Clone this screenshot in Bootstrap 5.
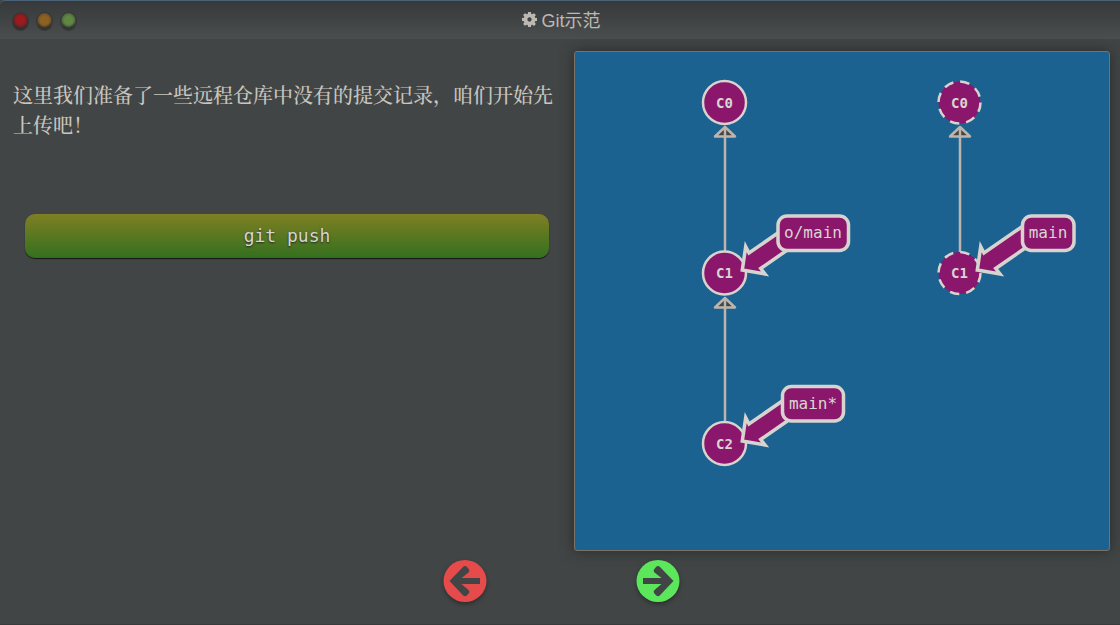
<!DOCTYPE html>
<html lang="zh-CN">
<head>
<meta charset="utf-8">
<meta name="viewport" content="width=device-width, initial-scale=1">
<title>Git示范</title>
<link rel="stylesheet" href="https://cdn.jsdelivr.net/npm/bootstrap@5.3.0/dist/css/bootstrap.min.css">
<style>
  body { background: #424545; color: #c9c5bf; font-family: "Liberation Sans", "Noto Sans CJK SC", sans-serif; }
  .title-bar { height: 39px; padding: 2px 0 0 3px; border-top: 1px solid #4a6278; border-top-left-radius: 5px; background: linear-gradient(#37393a, #4a4e4e); color: #bcb8b2; font-size: 18px; line-height: 24px; }
  .window-dots { left: 12px; top: 11px; gap: 7px; }
  .window-dots span { width: 17px; height: 19px; border-radius: 50%; border: 1px solid #343637; box-shadow: inset 0 -3px 2px #303233; }
  .dot-close { background: radial-gradient(circle at 50% 45%, #9a1b1d 35%, #5a2426 80%); }
  .dot-min { background: radial-gradient(circle at 50% 45%, #8d6121 35%, #584426 80%); }
  .dot-max { background: radial-gradient(circle at 50% 45%, #5f8642 35%, #43583a 80%); }
  .lesson { padding: 41px 13px 0 13px; }
  .lesson p { font-family: "Noto Serif CJK SC", "Noto Sans CJK SC", serif; font-size: 20px; font-weight: 500; line-height: 30px; margin-bottom: 74px; }
  .btn-command { height: 44px; border-radius: 10px; color: #d8d5d0; font: 18px/24px "DejaVu Sans Mono", monospace; background: linear-gradient(#7f7f23, #33701f); box-shadow: 0 1px 1px #141614; text-shadow: 0 1px 2px #222; border: 0; }
  .btn-command:hover { color: #fff; background: linear-gradient(#8a8a28, #3a7b24); }
  .canvas-col { width: 48.75%; padding: 12px 10px 0 0; }
  .git-canvas { background: #1b6291; border: 1px solid #7b7164; border-radius: 3px; box-shadow: 0 0 14px #292b2b; }
  .git-canvas text { font-family: "DejaVu Sans Mono", monospace; font-size: 16px; fill: #d9d5d0; text-anchor: middle; }
  .git-canvas .commit-id { font-size: 14px; font-weight: bold; }
  .commit { fill: #8b176d; stroke: #d7d4cf; stroke-width: 2.5; }
  .remote { stroke-dasharray: 9.5 7; }
  .tag { fill: #8b176d; stroke: #d7d4cf; stroke-width: 3.5; }
  .edge { fill: #444; stroke: #bbb5ae; stroke-width: 2.5; stroke-linejoin: round; }
  .pager { height: 74px; padding-top: 9px; padding-left: 3px; gap: 149px; border-bottom: 1px solid #383b3b; }
  .btn-step { width: 44px; height: 43px; border: 0; }
  .btn-step svg { filter: drop-shadow(0 2px 2px #2b2d2d); }
</style>
</head>
<body class="min-vh-100 d-flex flex-column">
<header class="title-bar position-relative d-flex align-items-center justify-content-center">
  <div class="window-dots position-absolute d-flex" aria-hidden="true"><span class="dot-close"></span><span class="dot-min"></span><span class="dot-max"></span></div>
  <svg class="me-1 mb-1" width="15" height="15" viewBox="0 0 16 16" fill="currentColor" aria-hidden="true">
    <path fill-rule="evenodd" d="M6.500 0h3l.4 2.100 1 .4L12.800 1.200l2 2-1.300 1.900.4 1 2.100.4v3l-2.100.4-.4 1 1.300 1.900-2 2-1.900-1.300-1 .4-.4 2.100h-3l-.4-2.100-1-.4-1.900 1.300-2-2 1.300-1.900-.4-1L0 9.500v-3l2.100-.4.4-1L1.200 3.200l2-2 1.900 1.300 1-.4zM8 5.700a2.300 2.300 0 1 0 0 4.600 2.300 2.300 0 0 0 0-4.600"/>
  </svg>
  <span>Git示范</span>
</header>
<main class="flex-grow-1 d-flex">
  <section class="lesson flex-grow-1">
    <p>这里我们准备了一些远程仓库中没有的提交记录&#xFF0C;咱们开始先上传吧&#xFF01;</p>
    <div class="px-2 mx-1 d-grid"><button type="button" class="btn btn-command">git push</button></div>
  </section>
  <section class="canvas-col flex-shrink-0 d-flex">
    <div class="git-canvas flex-grow-1 d-flex">
      <svg class="w-100 h-100" viewBox="575 52 534 498" role="img" aria-label="Git tree">
        <defs>
          <path id="pointer" d="M788 226 749 253 745.700 246.700 742.300 270 765 274 760.700 268.500 796 244"/>
          <g id="edge"><path d="M725 127 735 136.500H715Z"/><path d="M725 127V252"/></g>
        </defs>
        <use href="#edge" class="edge"/>
        <use href="#edge" class="edge" y="171"/>
        <use href="#edge" class="edge" x="235"/>
        <circle class="commit" cx="724.500" cy="102.500" r="21.500"/>
        <circle class="commit" cx="724.500" cy="273" r="21.500"/>
        <circle class="commit" cx="724.500" cy="443.500" r="21.500"/>
        <circle class="commit remote" cx="959.500" cy="102.500" r="21"/>
        <circle class="commit remote" cx="959.500" cy="273" r="21"/>
        <text class="commit-id" x="724.500" y="108">C0</text>
        <text class="commit-id" x="724.500" y="278">C1</text>
        <text class="commit-id" x="724.500" y="449">C2</text>
        <text class="commit-id" x="959.500" y="108">C0</text>
        <text class="commit-id" x="959.500" y="278">C1</text>
        <use href="#pointer" class="tag"/>
        <use href="#pointer" class="tag" y="171"/>
        <use href="#pointer" class="tag" x="235"/>
        <rect class="tag" x="778" y="216" width="70.500" height="34.500" rx="9"/>
        <rect class="tag" x="782.500" y="386.500" width="61" height="34.500" rx="9"/>
        <rect class="tag" x="1022.500" y="216" width="51.500" height="34.500" rx="9"/>
        <text x="813" y="238">o/main</text>
        <text x="813" y="409">main*</text>
        <text x="1048" y="238">main</text>
      </svg>
    </div>
  </section>
</main>
<footer class="pager d-flex justify-content-center align-items-start">
  <button type="button" class="btn btn-step p-0 d-flex" aria-label="上一步">
    <svg width="44" height="43" viewBox="0 0 44 43"><ellipse cx="22" cy="21" rx="21.500" ry="21" fill="#e54b4b"/><path fill="#424545" d="M6.500 21 20 7Q22 5 24 7L26 9.500Q27 11 25.500 12.500L18.500 18H37V24H18.500L25.500 30Q27 31.500 26 33L24 35.300Q22 37 20 35.300Z"/></svg>
  </button>
  <button type="button" class="btn btn-step p-0 d-flex" aria-label="下一步">
    <svg width="44" height="43" viewBox="0 0 44 43"><ellipse cx="22" cy="21" rx="21.500" ry="21" fill="#5ce65c"/><path fill="#424545" d="M37.500 21 24 7Q22 5 20 7L18 9.500Q17 11 18.500 12.500L25.500 18H7V24H25.500L18.500 30Q17 31.500 18 33L20 35.300Q22 37 24 35.300Z"/></svg>
  </button>
</footer>
<script src="https://cdn.jsdelivr.net/npm/bootstrap@5.3.0/dist/js/bootstrap.bundle.min.js"></script>
</body>
</html>
